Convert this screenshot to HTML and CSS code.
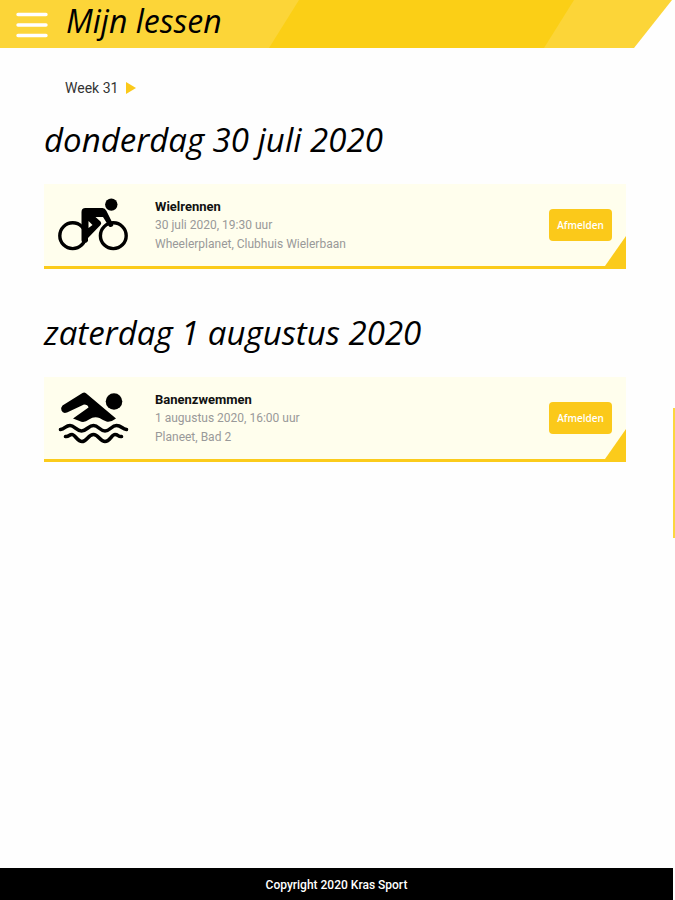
FILE: index.html
```html
<!DOCTYPE html>
<html lang="nl">
<head>
<meta charset="utf-8">
<meta name="viewport" content="width=device-width, initial-scale=1">
<title>Mijn lessen</title>
<link rel="stylesheet" href="styles.css">
</head>
<body>
<header class="topbar">
  <button class="menu" type="button" aria-label="Menu">
    <svg viewBox="0 0 32 26" width="32" height="26" fill="none" stroke="#fff" stroke-width="3.4" stroke-linecap="round"><path d="M2 2.5H30M2 13H30M2 23.5H30"/></svg>
  </button>
  <h1 class="title">Mijn lessen</h1>
</header>
<main class="content">
  <nav class="week">
    <span>Week 31</span>
    <button class="next" type="button" aria-label="Volgende week">
      <svg viewBox="0 0 10 12" width="10" height="12"><path d="M0 0L10 6L0 12Z" fill="#fbc91a"/></svg>
    </button>
  </nav>
  <section class="day">
    <h2 class="date">donderdag 30 juli 2020</h2>
    <article class="card">
      <svg class="icon" viewBox="0 0 72 56" width="72" height="56">
        <g fill="none" stroke="#000" stroke-width="3.4"><circle cx="15.7" cy="38.7" r="12.9"/><circle cx="56.3" cy="38.7" r="12.9"/></g>
        <circle cx="54.3" cy="7.6" r="6.2"/>
        <path d="M24.500 15Q24.500 11 28.500 11H45.500Q48 11 49.500 14L56.500 28Q55 31 52 29.500L46 20H38.500L43.500 24.500Q45 26 43.500 28L31 41V44Q30 46 27.500 46Q24.500 46 24.500 43ZM31.500 24V31L35.500 28Z" fill-rule="evenodd"/>
      </svg>
      <div class="info">
        <h3 class="name">Wielrennen</h3>
        <p>30 juli 2020, 19:30 uur</p>
        <p>Wheelerplanet, Clubhuis Wielerbaan</p>
      </div>
      <button class="cancel" type="button">Afmelden</button>
    </article>
  </section>
  <section class="day">
    <h2 class="date">zaterdag 1 augustus 2020</h2>
    <article class="card">
      <svg class="icon" viewBox="0 0 72 56" width="72" height="56">
        <circle cx="57" cy="11.500" r="8.300"/>
        <path d="M5.500 15.500L25.500 3Q27.300 2 29 3.200L59 28.500Q54 32.500 49.500 31.500Q46 30 42.500 28Q37 26 32 29.500Q27 33.500 22.500 31L16 28.500L31.500 17.500Q31 14.500 27 14.500L10 22.500Q6 24 4.500 20.500Q3.500 17.500 5.500 15.500Z"/>
        <g fill="none" stroke="#000" stroke-width="3.600" stroke-linecap="round">
          <path d="M3.500 39.500C8 39 8.500 35.500 13 35.500S19.500 41 24.500 41S31.500 35.500 36.500 35.500S43 41 48 41S54.500 35.500 59.500 35.500S65 39 69.500 39.500"/>
          <path d="M8.500 46.500C12 47 12 44.500 15 44.500S20.500 51.500 25 51.500S31.500 44.500 36.500 44.500S43 51.500 48 51.500S54.500 44.500 58 44.500S61 47 64.500 46.500"/>
        </g>
      </svg>
      <div class="info">
        <h3 class="name">Banenzwemmen</h3>
        <p>1 augustus 2020, 16:00 uur</p>
        <p>Planeet, Bad 2</p>
      </div>
      <button class="cancel" type="button">Afmelden</button>
    </article>
  </section>
</main>
<div class="edge-tab"></div>
<footer class="footer">Copyright 2020 Kras Sport</footer>
</body>
</html>
```
FILE: styles.css
```css
* { box-sizing: border-box; }

body {
  margin: 0;
  min-height: 100vh;
  display: flex;
  flex-direction: column;
  background: #fefefe;
  color: #111;
  font-family: Roboto, "Liberation Sans", sans-serif;
  font-size: 12px;
}

h1, h2, h3, p { margin: 0; }

button {
  padding: 0;
  border: 0;
  background: none;
  cursor: pointer;
}

svg { display: block; }

.topbar {
  position: relative;
  display: flex;
  align-items: flex-start;
  gap: 18px;
  height: 48px;
  padding: 0 16px;
  background: #fcd538;
  clip-path: polygon(0 0, calc(100% - 3px) 0, calc(100% - 41px) 100%, 0 100%);
}

.topbar::before {
  content: "";
  position: absolute;
  inset: 0;
  background: #fbcf16;
  clip-path: polygon(299px 0, calc(100% - 101px) 0, calc(100% - 131px) 100%, 269px 100%);
}

.menu { margin-top: 12px; }

.title,
.date {
  font-family: "Open Sans", "Noto Sans", sans-serif;
  font-style: italic;
  font-weight: 400;
  color: #000;
}

.title {
  position: relative;
  font-size: 32px;
  line-height: 42px;
}

.content {
  flex: 1;
  padding: 32px 49px 32px 44px;
}

.week {
  display: flex;
  align-items: center;
  gap: 8px;
  height: 16px;
  padding-left: 21px;
  font-size: 14px;
  color: #333;
}

.day { margin-bottom: 32px; }

.date {
  margin-bottom: 20px;
  padding-top: 20px;
  font-size: 33px;
  line-height: 48px;
}

.day + .day .date { padding-top: 8px; }

.card {
  position: relative;
  display: flex;
  align-items: center;
  height: 85px;
  padding: 0 14px 0 13px;
  background: #fffeed;
  border-bottom: 3px solid #fbcb1b;
}

.card::after {
  content: "";
  position: absolute;
  right: 0;
  bottom: 0;
  width: 21px;
  height: 30px;
  background: #fbcb1b;
  clip-path: polygon(100% 0, 100% 100%, 0 100%);
}

.info {
  flex: 1;
  margin-left: 26px;
  color: #999;
  font-size: 12px;
  line-height: 19px;
}

.name {
  color: #111;
  font-size: 13px;
  font-weight: 700;
}

.cancel {
  width: 63px;
  height: 32px;
  border-radius: 4px;
  background: #fbc91a;
  color: #fff;
  font-family: "Open Sans", sans-serif;
  font-size: 10px;
  font-weight: 600;
}

.edge-tab {
  position: absolute;
  top: 408px;
  right: 0;
  width: 2px;
  height: 130px;
  background: #fbd63f;
}

.footer {
  height: 32px;
  margin-right: 2px;
  background: #000;
  color: #fff;
  font-size: 12px;
  font-weight: 500;
  line-height: 34px;
  text-align: center;
}
```
